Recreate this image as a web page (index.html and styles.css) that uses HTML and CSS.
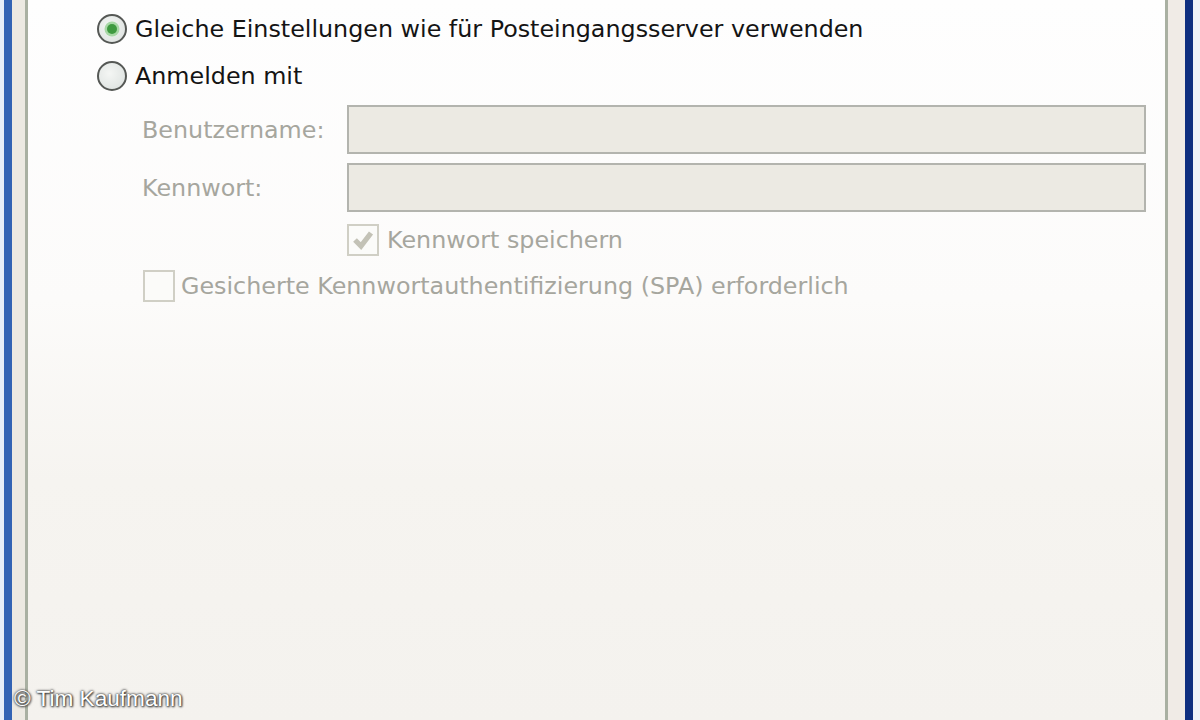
FILE: index.html
```html
<!DOCTYPE html>
<html lang="de">
<head>
<meta charset="utf-8">
<title>Postausgangsserver</title>
<link rel="stylesheet" href="styles.css">
</head>
<body>
<div class="screen">
  <div class="edge edge-left">
    <div class="bg-strip"></div>
    <div class="frame-blue"></div>
    <div class="frame-light"></div>
    <div class="frame-line"></div>
  </div>
  <main class="panel">
    <div class="radio-row">
      <span class="radio checked"></span>
      <span class="rlabel">Gleiche Einstellungen wie für Posteingangsserver verwenden</span>
    </div>
    <div class="radio-row">
      <span class="radio"></span>
      <span class="rlabel">Anmelden mit</span>
    </div>
    <div class="fields">
      <label class="flabel">Benutzername:</label>
      <div class="input"></div>
      <label class="flabel">Kennwort:</label>
      <div class="input"></div>
      <div class="spacer"></div>
      <div class="check-row">
        <span class="check checked">
          <svg viewBox="0 0 14 14" width="28" height="28"><path d="M3 7 L6 10 L11 3.5" fill="none" stroke="#c3c2b6" stroke-width="2.6"/></svg>
        </span>
        <span class="clabel">Kennwort speichern</span>
      </div>
    </div>
    <div class="check-row spa">
      <span class="check"></span>
      <span class="clabel">Gesicherte Kennwortauthentifizierung (SPA) erforderlich</span>
    </div>
  </main>
  <div class="edge edge-right">
    <div class="frame-line"></div>
    <div class="frame-light wide"></div>
    <div class="frame-blue dark"></div>
    <div class="bg-strip narrow"></div>
  </div>
</div>
<div class="credit">© Tim Kaufmann</div>
</body>
</html>
```

FILE: styles.css
```css
html, body {
  margin: 0;
  padding: 0;
  width: 1200px;
  height: 720px;
  overflow: hidden;
}

body {
  position: relative;
  font-family: "DejaVu Sans", "Liberation Sans", sans-serif;
}

.screen {
  display: flex;
  width: 1200px;
  height: 720px;
}

.edge {
  display: flex;
  flex: none;
}

.bg-strip {
  width: 4px;
  background: #e6eef8;
}
.bg-strip.narrow {
  width: 7px;
  background: #eef2f8;
}

.frame-blue {
  width: 8px;
  background: #3263b4;
}
.frame-blue.dark {
  background: #0f2f80;
}

.frame-light {
  width: 13px;
  background: #ece9e2;
}
.frame-light.wide {
  width: 17px;
  background: #f0ebe6;
}

.frame-line {
  width: 3px;
  background: #a9b0a2;
}

.panel {
  flex: 1;
  padding: 14px 0 0 69px;
  background: linear-gradient(to bottom, #fefefe 0px, #fcfbfa 300px, #f6f4f0 480px, #f4f2ee 720px);
  color: #141414;
}

.radio-row {
  display: flex;
  align-items: center;
  height: 30px;
  margin-bottom: 17px;
}

.radio {
  box-sizing: border-box;
  width: 30px;
  height: 30px;
  border-radius: 50%;
  border: 2.5px solid #555855;
  background: radial-gradient(circle at 40% 40%, #f4f6f4 0%, #e2e6e4 70%, #d4d8d6 100%);
  display: flex;
  align-items: center;
  justify-content: center;
  flex: none;
}
.radio.checked::after {
  content: "";
  width: 10px;
  height: 10px;
  border-radius: 50%;
  background: #3f9a40;
  box-shadow: 0 0 0 2.5px #a8d8a6;
}

.rlabel {
  margin-left: 8px;
  font-size: 23.8px;
}

.fields {
  display: grid;
  grid-template-columns: 205px 799px;
  row-gap: 9px;
  margin-top: -3px;
  margin-left: 45px;
  align-items: center;
}

.flabel {
  font-size: 23.8px;
  color: #a6a69e;
}

.input {
  box-sizing: border-box;
  height: 49px;
  border: 2px solid #b3b4ae;
  background: #eceae3;
}

.spacer {
  height: 1px;
}

.check-row {
  display: flex;
  align-items: center;
  color: #a6a69e;
  margin-top: 3px;
}

.check {
  box-sizing: border-box;
  width: 32px;
  height: 32px;
  border: 2px solid #d0cfc5;
  background: #fbfbf9;
  display: flex;
  align-items: center;
  justify-content: center;
  flex: none;
}

.clabel {
  margin-left: 8px;
  font-size: 23.8px;
}

.check-row.spa {
  margin-top: 14px;
  margin-left: 46px;
}
.check-row.spa .clabel {
  margin-left: 6px;
}

.credit {
  position: absolute;
  left: 14px;
  bottom: 8px;
  font-family: "Liberation Sans", Arial, sans-serif;
  font-size: 22.6px;
  color: #ffffff;
  text-shadow: 0 0 2px #333, 0 0 3px #555, 1px 1px 2px #444;
}
```
